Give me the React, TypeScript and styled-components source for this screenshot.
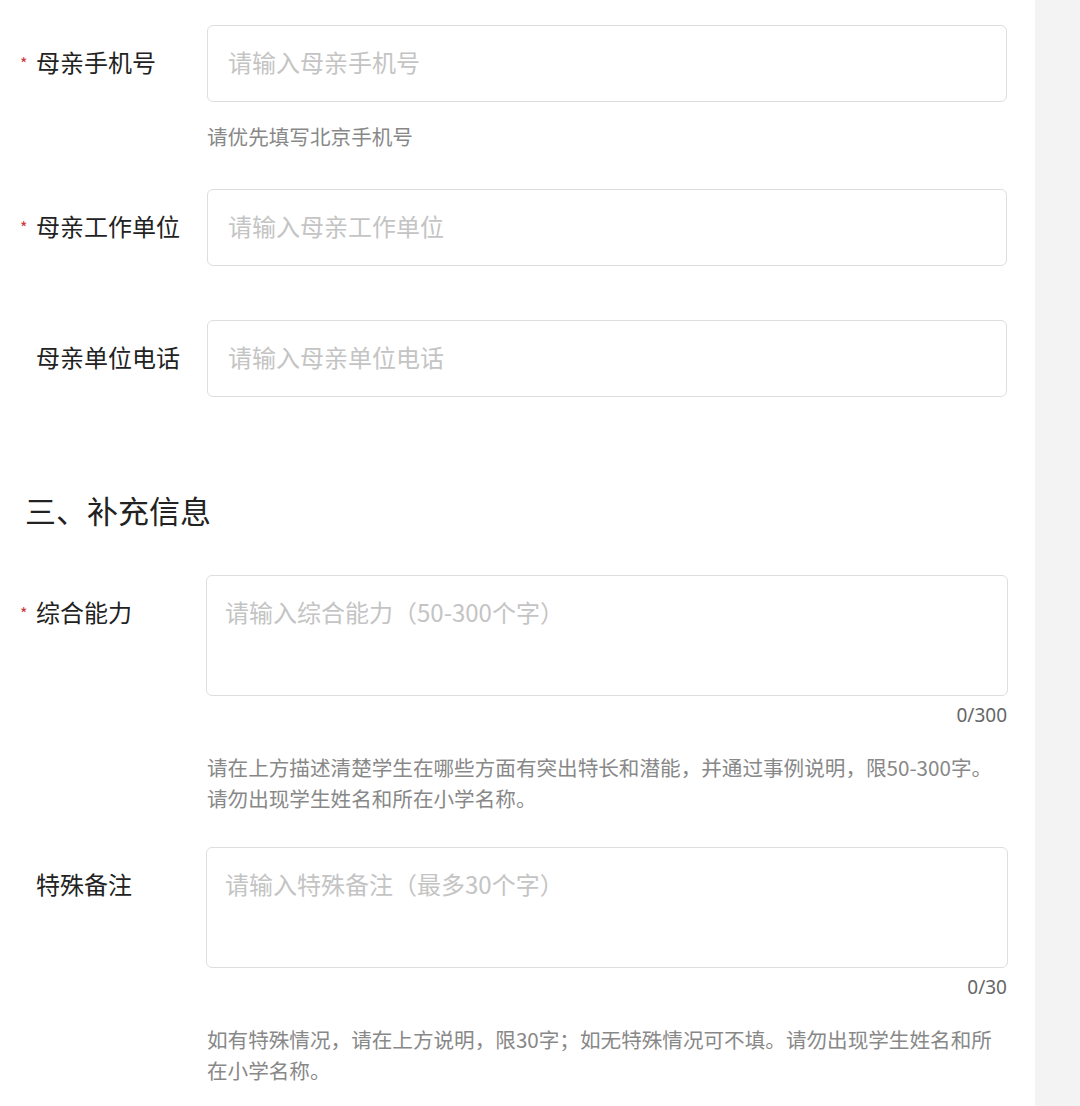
import React from 'react';
import styled, { createGlobalStyle } from 'styled-components';

const GlobalStyle = createGlobalStyle`
  html, body {
    margin: 0;
    padding: 0;
    background: #f3f3f3;
    font-family: "Noto Sans CJK SC", "Noto Sans", sans-serif;
  }
`;

const Page = styled.div`
  width: 1035px;
  min-height: 1106px;
  background: #ffffff;
  padding: 25px 0 0 0;
  box-sizing: border-box;
`;

const FormItem = styled.div<{ $gap: number }>`
  display: flex;
  padding-left: 20px;
  margin-bottom: ${(p) => p.$gap}px;
`;

const Label = styled.div`
  width: 187px;
  flex-shrink: 0;
  display: flex;
  align-items: center;
  height: 72px;
  font-size: 24px;
  color: #222;
`;

const Star = styled.span<{ $show: boolean }>`
  width: 16px;
  font-size: 16px;
  line-height: 1;
  color: #cc3338;
  visibility: ${(p) => (p.$show ? 'visible' : 'hidden')};
  transform: translateY(2px);
`;

const Field = styled.div`
  width: 800px;
  display: flex;
  flex-direction: column;
`;

const Input = styled.input`
  height: 77px;
  box-sizing: border-box;
  border: 1.5px solid #dedede;
  border-radius: 6px;
  padding: 0 20px 4px;
  font-family: inherit;
  font-size: 24px;
  color: #222;
  outline: none;
  &::placeholder {
    color: #c4c4c4;
  }
`;

const TextArea = styled.textarea`
  height: 121px;
  margin-left: -1px;
  width: 802px;
  box-sizing: border-box;
  border: 1.5px solid #dedede;
  border-radius: 6px;
  padding: 18px 18px;
  font-family: inherit;
  font-size: 24px;
  line-height: 36px;
  color: #222;
  resize: none;
  outline: none;
  &::placeholder {
    color: #c4c4c4;
  }
`;

const Counter = styled.div`
  text-align: right;
  font-family: "Noto Sans", sans-serif;
  font-size: 19px;
  line-height: 24px;
  color: #666;
  margin-top: 7px;
`;

const Hint = styled.div<{ $top: number }>`
  margin-top: ${(p) => p.$top}px;
  font-size: 20.6px;
  line-height: 31px;
  color: #888;
`;

const Heading = styled.h2`
  margin: 0 0 45px 25px;
  font-size: 31px;
  line-height: 40px;
  font-weight: 400;
  color: #222;
`;

type InputRow = {
  label: string;
  required: boolean;
  placeholder: string;
  hint?: string;
  gap: number;
};

const parentRows: InputRow[] = [
  { label: '母亲手机号', required: true, placeholder: '请输入母亲手机号', hint: '请优先填写北京手机号', gap: 37 },
  { label: '母亲工作单位', required: true, placeholder: '请输入母亲工作单位', gap: 54 },
  { label: '母亲单位电话', required: false, placeholder: '请输入母亲单位电话', gap: 93 },
];

type AreaRow = {
  label: string;
  required: boolean;
  placeholder: string;
  max: number;
  hint: string;
  gap: number;
};

const extraRows: AreaRow[] = [
  {
    label: '综合能力',
    required: true,
    placeholder: '请输入综合能力（50-300个字）',
    max: 300,
    hint: '请在上方描述清楚学生在哪些方面有突出特长和潜能，并通过事例说明，限50-300字。请勿出现学生姓名和所在小学名称。',
    gap: 33,
  },
  {
    label: '特殊备注',
    required: false,
    placeholder: '请输入特殊备注（最多30个字）',
    max: 30,
    hint: '如有特殊情况，请在上方说明，限30字；如无特殊情况可不填。请勿出现学生姓名和所在小学名称。',
    gap: 0,
  },
];

export default function App() {
  return (
    <>
      <GlobalStyle />
      <Page>
        {parentRows.map((row) => (
          <FormItem key={row.label} $gap={row.gap}>
            <Label>
              <Star $show={row.required}>*</Star>
              {row.label}
            </Label>
            <Field>
              <Input placeholder={row.placeholder} />
              {row.hint && <Hint $top={19}>{row.hint}</Hint>}
            </Field>
          </FormItem>
        ))}

        <Heading>三、补充信息</Heading>

        {extraRows.map((row) => (
          <FormItem key={row.label} $gap={row.gap}>
            <Label>
              <Star $show={row.required}>*</Star>
              {row.label}
            </Label>
            <Field>
              <TextArea placeholder={row.placeholder} />
              <Counter>0/{row.max}</Counter>
              <Hint $top={25}>{row.hint}</Hint>
            </Field>
          </FormItem>
        ))}
      </Page>
    </>
  );
}
